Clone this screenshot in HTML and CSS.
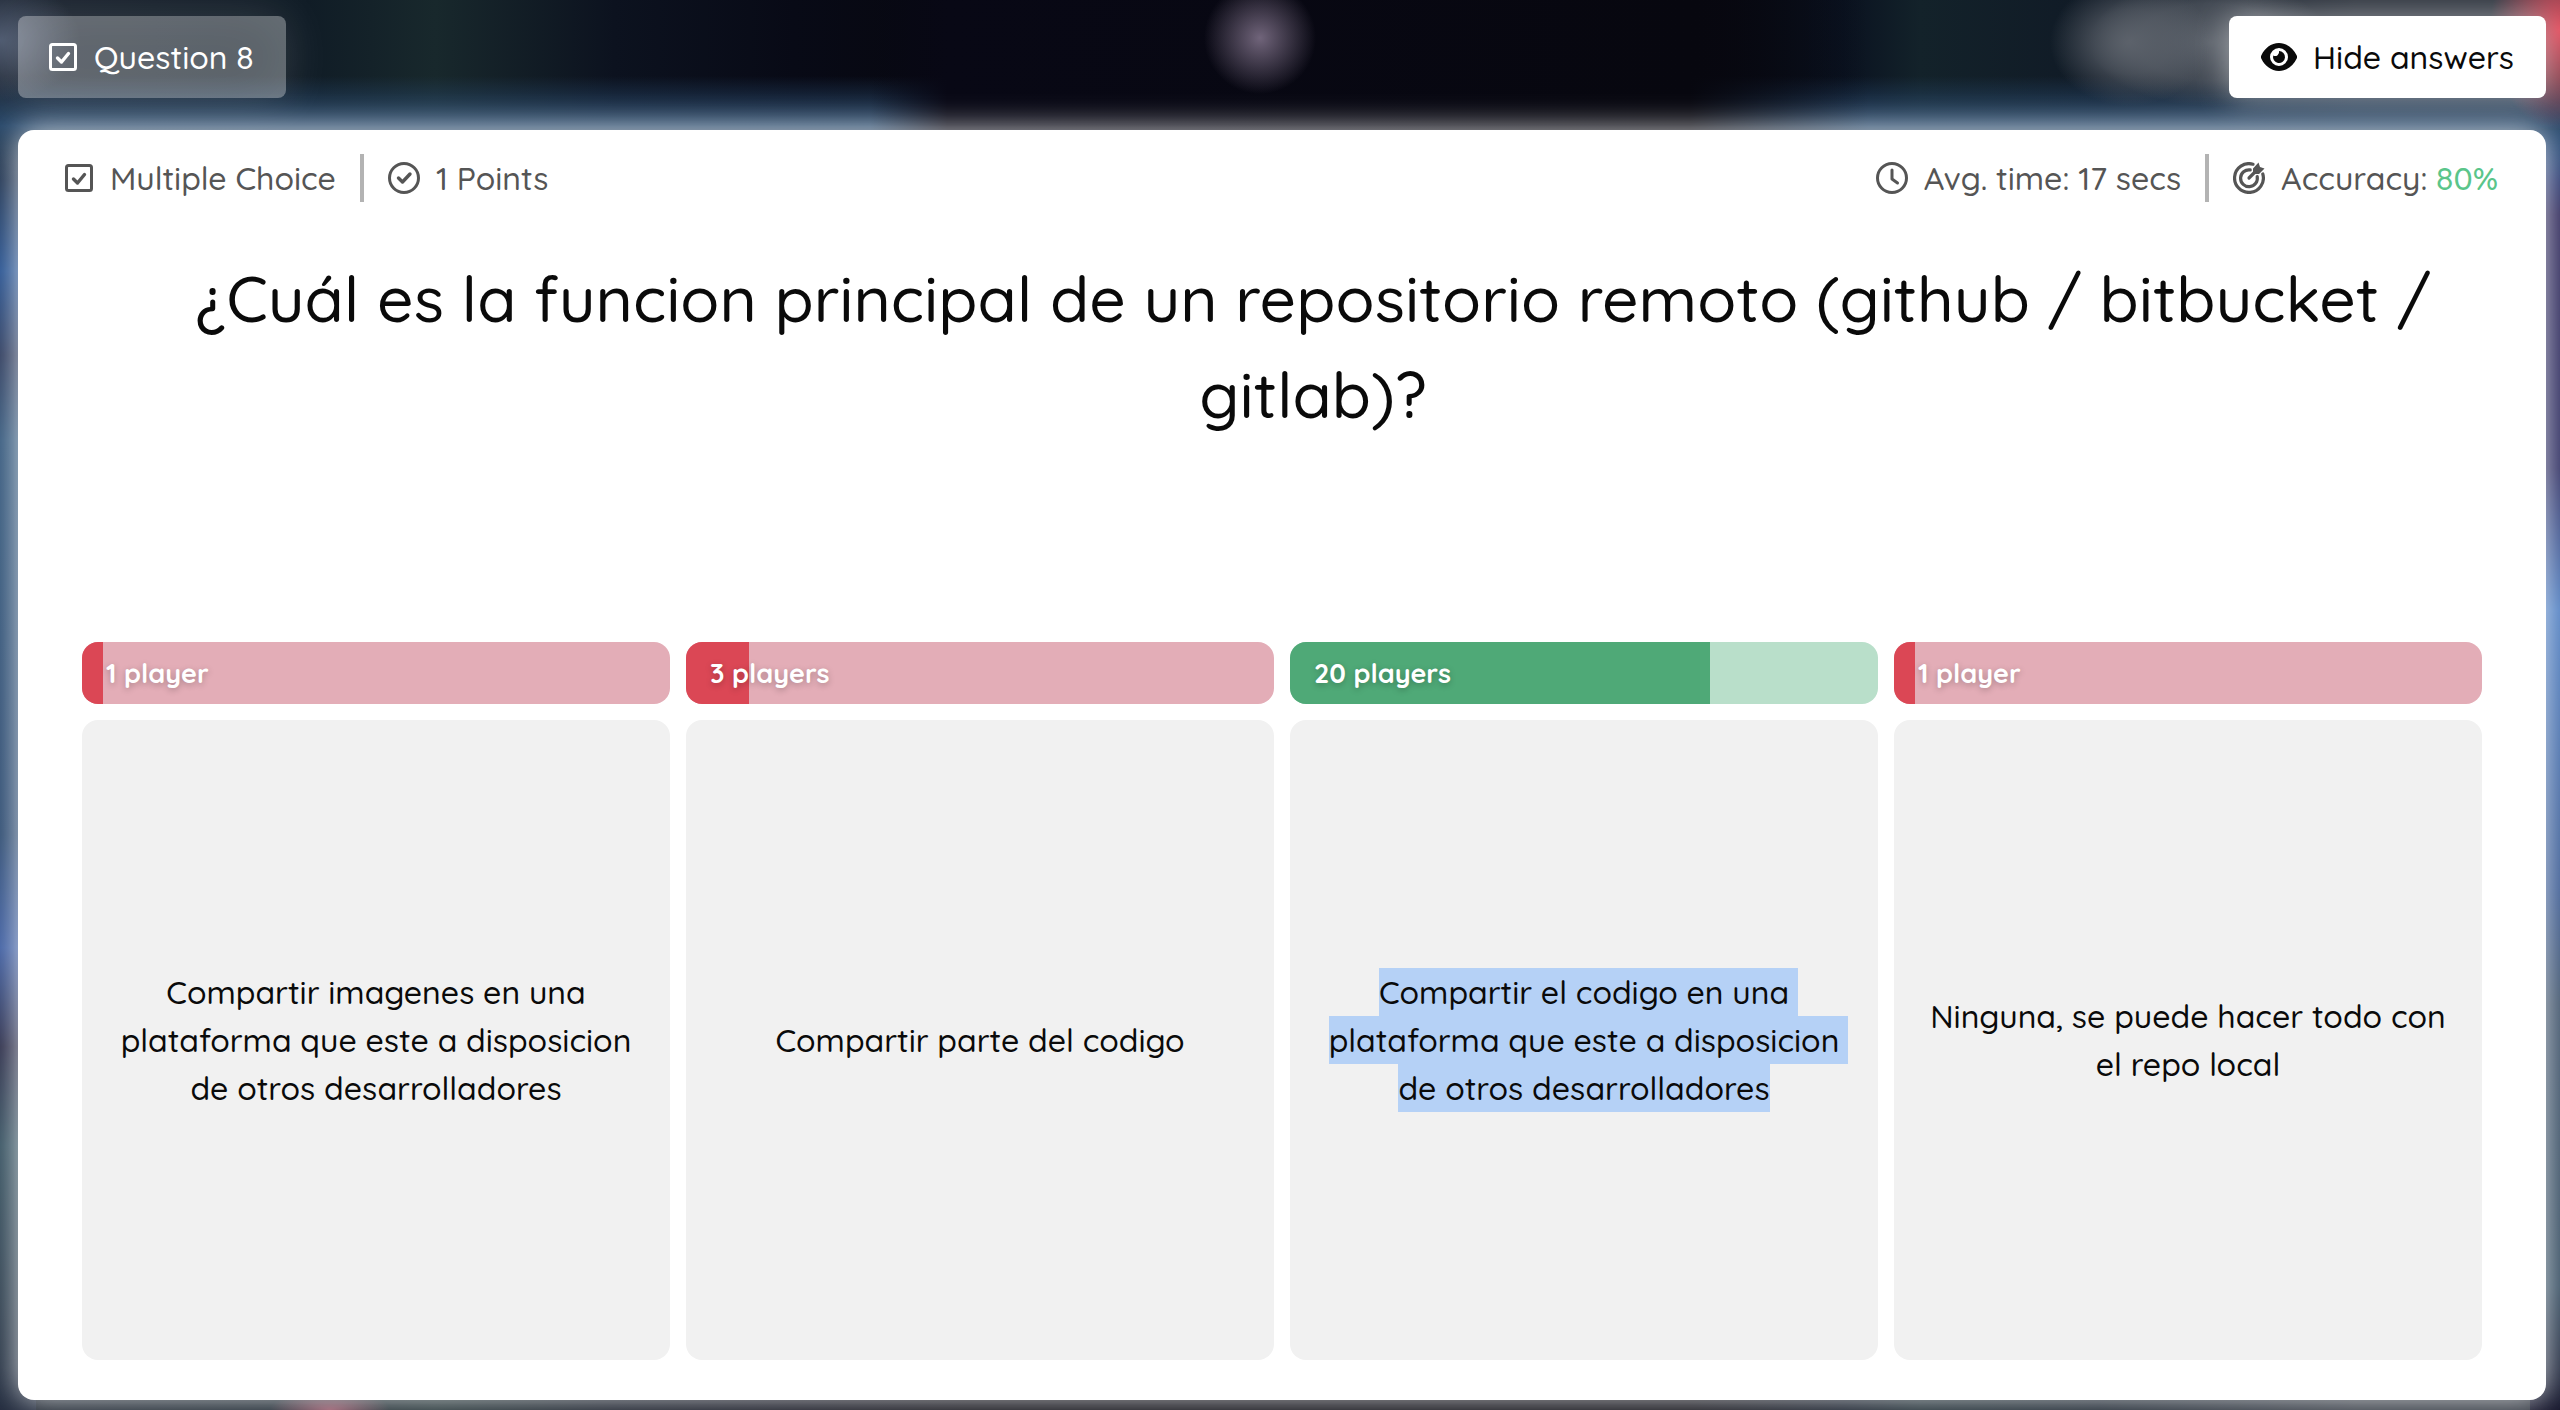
FILE: index.html
```html
<!DOCTYPE html>
<html lang="es">
<head>
<meta charset="utf-8">
<meta name="viewport" content="width=device-width, initial-scale=1">
<title>Question 8</title>
<link rel="stylesheet" href="styles.css">
</head>
<body>
<svg class="sprite" aria-hidden="true">
  <symbol id="i-box" viewBox="0 0 30 32"><rect x="2.500" y="3.500" width="25" height="25" rx="2" fill="none" stroke="currentColor" stroke-width="3"/><path d="M9.500 17l4 4 7-8.500" fill="none" stroke="currentColor" stroke-width="3.400" stroke-linecap="round" stroke-linejoin="round"/></symbol>
  <symbol id="i-circle" viewBox="0 0 32 32"><circle cx="16" cy="16" r="14.500" fill="none" stroke="currentColor" stroke-width="3"/><path d="M10.500 16l4 4 7.500-8" fill="none" stroke="currentColor" stroke-width="3.400" stroke-linecap="round" stroke-linejoin="round"/></symbol>
  <symbol id="i-clock" viewBox="0 0 32 32"><circle cx="16" cy="16" r="14.500" fill="none" stroke="currentColor" stroke-width="3"/><path d="M16 8v9l5.500 4" fill="none" stroke="currentColor" stroke-width="3" stroke-linecap="round" stroke-linejoin="round"/></symbol>
  <symbol id="i-target" viewBox="0 0 32 32"><g fill="none" stroke="currentColor" stroke-width="3.200" stroke-linecap="round"><path d="M20 2.200A14.400 14.400 0 1 0 29.800 12"/><path d="M17.200 7.900A8.400 8.400 0 1 0 24.200 14.500"/><path d="M16 16L24 8"/></g><path d="M20 12V6.500L25.500.500 27 5l4.500 1.500L26 12z" fill="currentColor"/></symbol>
  <symbol id="i-eye" viewBox="0 0 36 32"><path fill="currentColor" fill-rule="evenodd" d="M18 2C10 2 3.500 7.500.4 14.200a3.600 3.600 0 0 0 0 3.600C3.500 24.500 10 30 18 30s14.500-5.500 17.600-12.200a3.600 3.600 0 0 0 0-3.600C32.500 7.500 26 2 18 2zm0 5a9 9 0 1 1 0 18 9 9 0 0 1 0-18z"/><path fill="currentColor" d="M18 10a6 6 0 1 1-5.800 4.500 4 4 0 0 0 5.800-4.500z"/></symbol>
</svg>
<header class="topbar">
  <div class="pill"><svg class="icon icon-box"><use href="#i-box"/></svg><span>Question 8</span></div>
  <button class="toggle" type="button"><svg class="icon icon-eye"><use href="#i-eye"/></svg><span>Hide answers</span></button>
</header>
<main class="card">
  <div class="meta">
    <div class="meta-group">
      <span class="meta-item"><svg class="icon icon-box"><use href="#i-box"/></svg>Multiple Choice</span>
      <span class="meta-item"><svg class="icon"><use href="#i-circle"/></svg>1 Points</span>
    </div>
    <div class="meta-group">
      <span class="meta-item"><svg class="icon"><use href="#i-clock"/></svg>Avg. time: 17 secs</span>
      <span class="meta-item"><svg class="icon"><use href="#i-target"/></svg><span>Accuracy: <span class="good">80%</span></span></span>
    </div>
  </div>
  <h1 class="question">¿Cuál es la funcion principal de un repositorio remoto (github / bitbucket / gitlab)?</h1>
  <div class="answers">
    <section class="answer">
      <div class="bar"><div class="fill" style="width:3.6%"></div><span class="count">1 player</span></div>
      <div class="option"><p>Compartir imagenes en una plataforma que este a disposicion de otros desarrolladores</p></div>
    </section>
    <section class="answer">
      <div class="bar"><div class="fill" style="width:10.7%"></div><span class="count">3 players</span></div>
      <div class="option"><p>Compartir parte del codigo</p></div>
    </section>
    <section class="answer">
      <div class="bar correct"><div class="fill" style="width:71.4%"></div><span class="count">20 players</span></div>
      <div class="option"><p><mark>Compartir el codigo en una plataforma que este a disposicion de otros desarrolladores</mark></p></div>
    </section>
    <section class="answer">
      <div class="bar"><div class="fill" style="width:3.6%"></div><span class="count">1 player</span></div>
      <div class="option"><p>Ninguna, se puede hacer todo con el repo local</p></div>
    </section>
  </div>
</main>
</body>
</html>
```

FILE: styles.css
```css
* { box-sizing: border-box; }
body {
  margin: 0;
  min-height: 100vh;
  padding: 16px 14px 10px 18px;
  display: flex;
  flex-direction: column;
  gap: 32px;
  font: 500 32px/48px Quicksand, Lato, sans-serif;
  color: #0a0a0a;
  /* blurred backdrop: soft lights over a dark base */
  background:
    radial-gradient(ellipse 56px 56px at 1260px 38px, #70647a, rgba(112,100,122,.5) 50%, transparent),
    radial-gradient(ellipse 80px 64px at calc(100% - 430px) 42px, #5c626b, rgba(92,98,107,.6) 50%, transparent),
    radial-gradient(ellipse 120px 64px at calc(100% - 350px) 42px, #5c626b, rgba(92,98,107,.6) 60%, transparent),
    radial-gradient(ellipse 70px 100px at 100% 30px, #e04c5c, transparent),
    radial-gradient(ellipse 80px 60px at 0 40px, #4c586e, transparent),
    linear-gradient(90deg, transparent 34%, #080815 37%, #07070f 66%, transparent 73%) 0 0 / 100% 140px no-repeat,
    linear-gradient(transparent 76px, #28486a 126px, transparent 180px) 0 0 / 100% 180px no-repeat,
    radial-gradient(ellipse 60px 20px at 330px 100%, #8c4a5e, transparent),
    linear-gradient(#1c2430 0, #24508f 10%, #2c3a5c 16%, #34587c 22%, #2c4a70 50%, #3c5ca0 58%, #2a2c48 65%, #34505f 72%, #2c3c4c 84%, #14142a 100%) 0 130px / 36px 100% no-repeat,
    linear-gradient(#24508f 0, #2c2658 6%, #2c2c60 24%, #4c7cc0 34%, #385890 54%, #3c5068 62%, #344c60 82%, #14142a 91%) 100% 130px / 30px 100% no-repeat,
    linear-gradient(90deg, #1c2430 0, #101c26 12%, #18282c 17%, #0c121f 24%, #080a16 31%, #07070f 38%, #07070f 66%, #0a1220 72%, #13222a 75%, #101a26 82%, #303640 92%);
}
.sprite { display: none; }
.topbar { display: flex; justify-content: space-between; }
.pill, .toggle {
  display: flex;
  align-items: center;
  gap: 16px;
  height: 82px;
  padding: 0 32px;
  border: 0;
  border-radius: 8px;
  font: inherit;
}
.pill {
  padding-left: 30px;
  color: #fff;
  background: rgba(255,255,255,.3);
  box-shadow: 0 0 48px rgba(255,255,255,.15), inset 0 0 60px rgba(255,255,255,.1);
}
.toggle { color: #0a0a0a; background: #fff; box-shadow: 0 0 32px rgba(255,255,255,.5); }
.icon { width: 32px; height: 32px; flex: none; }
.icon-box { width: 30px; }
.icon-eye { width: 36px; }
.card {
  flex: 1;
  display: flex;
  flex-direction: column;
  padding: 24px 48px 40px 46px;
  border-radius: 16px;
  background: #fff;
  box-shadow: 0 0 32px rgba(255,255,255,.8);
}
.meta, .meta-group, .meta-item { display: flex; }
.meta { justify-content: space-between; color: #555; }
.meta-item { align-items: center; gap: 16px; }
.meta-item + .meta-item { margin-left: 24px; padding-left: 24px; border-left: 4px solid #b3b3b3; }
.good { color: #5ac58a; }
.question {
  margin: 48px 16px 0 80px;
  font-size: 64px;
  line-height: 96px;
  font-weight: 500;
  text-align: center;
}
.answers {
  flex: 1;
  display: grid;
  grid-template-columns: repeat(4, 1fr);
  gap: 16px;
  margin: 200px 16px 0 18px;
}
.answer { display: flex; flex-direction: column; gap: 16px; }
.bar {
  display: grid;
  align-items: center;
  height: 62px;
  border-radius: 16px;
  overflow: hidden;
  background: #e3adb7;
}
.bar > * { grid-area: 1 / 1; }
.fill { height: 62px; background: #db4755; }
.correct { background: #b9dfca; }
.correct .fill { background: #4fa977; }
.count {
  padding-left: 24px;
  color: #fff;
  font-size: 27px;
  font-weight: 700;
  text-shadow: 0 2px 6px rgba(0,0,0,.25);
}
.option {
  flex: 1;
  display: flex;
  align-items: center;
  justify-content: center;
  padding: 0 32px;
  border-radius: 16px;
  background: #f1f1f1;
  text-align: center;
}
.option p { margin: 0; white-space: pre-wrap; }
mark { padding: 4px 0; color: inherit; background: #b5d1f6; }
```
